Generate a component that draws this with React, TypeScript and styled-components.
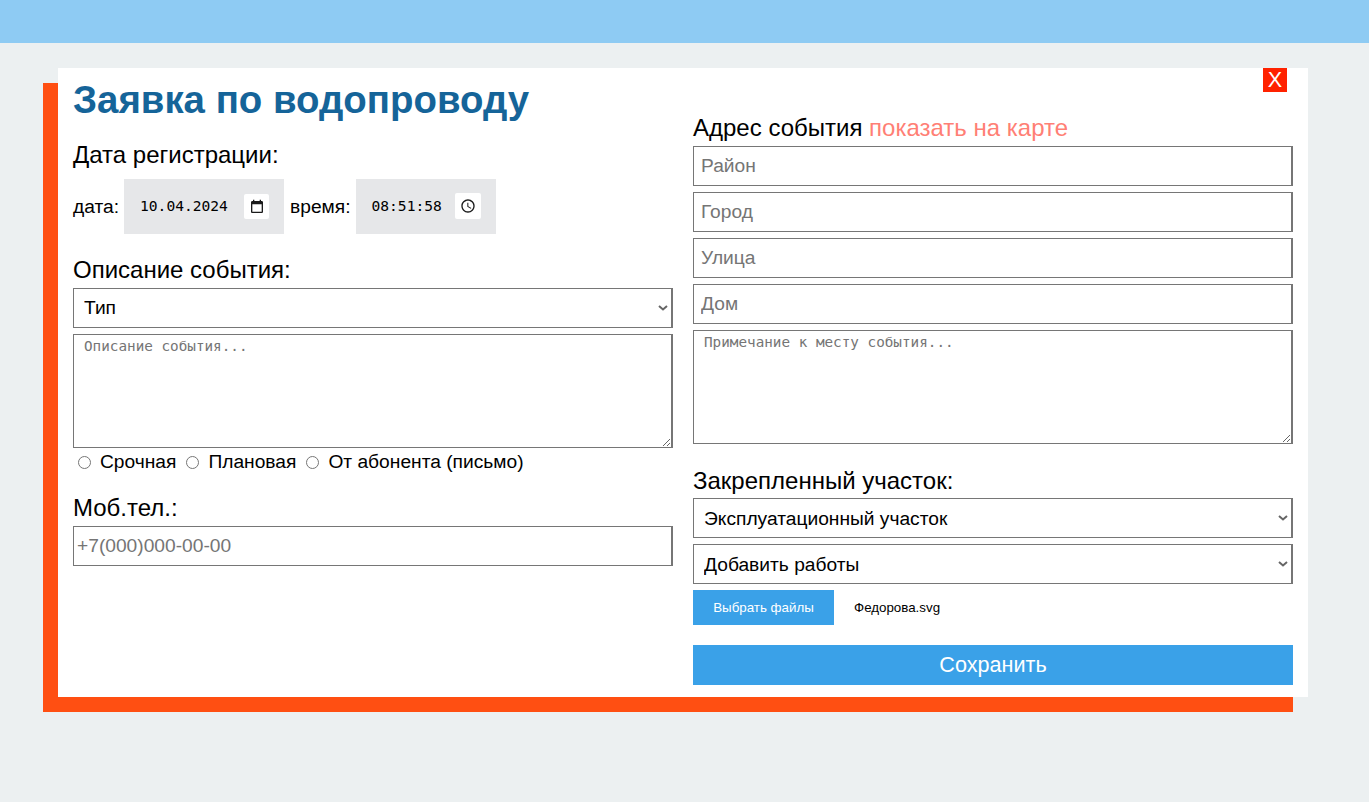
import React from "react";
import styled, { createGlobalStyle } from "styled-components";

const chevron =
  "data:image/svg+xml," +
  encodeURIComponent(
    '<svg xmlns="http://www.w3.org/2000/svg" width="10" height="6" viewBox="0 0 10 6"><path d="M1 1l4 3.5L9 1" fill="none" stroke="#666" stroke-width="2"/></svg>'
  );

const Global = createGlobalStyle`
  html, body { margin: 0; padding: 0; background: #ecf0f1; font-family: "Liberation Sans", Arial, sans-serif; }
  * { box-sizing: border-box; }
`;
const Page = styled.div`
  height: 802px;
  overflow: hidden;
`;
const TopBar = styled.div`
  height: 43px;
  background: #8ecbf3;
`;
const Modal = styled.form`
  position: relative;
  width: 1250px;
  height: 629px;
  margin: 25px 0 0 58px;
  padding: 15px;
  background: #fff;
  box-shadow: -15px 15px 0 #ff4f12;
  display: grid;
  grid-template-columns: 600px 600px;
  column-gap: 20px;
`;
const Close = styled.button`
  position: absolute;
  top: 0;
  right: 21px;
  width: 24px;
  height: 24px;
  padding: 0;
  border: 0;
  background: #ff2200;
  color: #fff;
  font-family: "Liberation Sans", Arial, sans-serif;
  font-size: 21.6px;
  line-height: 24px;
`;
const Column = styled.div`
  display: flex;
  flex-direction: column;
  min-width: 0;
`;
const Title = styled.h1`
  margin: 0 0 25px;
  font-size: 38.4px;
  line-height: 33px;
  font-weight: 700;
  color: #156499;
`;
const Label = styled.div<{ $mt?: number; $mb?: number }>`
  font-size: 24px;
  line-height: 28px;
  color: #000;
  margin-top: ${(p) => p.$mt ?? 0}px;
  margin-bottom: ${(p) => p.$mb ?? 3}px;
`;
const Link = styled.span`
  color: #ff7f75;
`;
const DateRow = styled.div`
  display: flex;
  align-items: center;
  gap: 5px;
  margin-top: 7px;
  font-size: 19.2px;
`;
const TimeText = styled.span`
  margin-left: 1px;
  margin-right: 1px;
`;
const PickerField = styled.div<{ $w: number; $pl: number }>`
  width: ${(p) => p.$w}px;
  height: 55px;
  padding: 0 15px 0 ${(p) => p.$pl}px;
  background: #e6e7e9;
  display: flex;
  align-items: center;
  justify-content: space-between;
`;
const PickerValue = styled.input`
  width: 92px;
  min-width: 0;
  padding: 0;
  margin-bottom: 2px;
  border: 0;
  outline: 0;
  background: transparent;
  font-family: "DejaVu Sans Mono", "Liberation Mono", monospace;
  font-size: 14.6px;
  color: #000;
`;
const PickerButton = styled.button<{ $size: number; $lift?: number }>`
  width: ${(p) => p.$size}px;
  height: ${(p) => p.$size}px;
  margin-bottom: ${(p) => p.$lift ?? 0}px;
  flex: none;
  padding: 0;
  border: 0;
  border-radius: 2px;
  background: #fff;
  display: flex;
  align-items: center;
  justify-content: center;
`;
const Box = styled.input`
  display: block;
  width: 100%;
  height: 40px;
  padding: 0 7px;
  margin-bottom: 6px;
  border-style: solid;
  border-color: #767676;
  border-width: 1px 2px 1px 1px;
  border-radius: 0;
  outline: 0;
  background: #fff;
  font-family: "Liberation Sans", Arial, sans-serif;
  font-size: 19.2px;
  color: #000;
  &::placeholder { color: #757575; opacity: 1; }
`;
const PhoneBox = styled(Box)`
  padding: 0 3px;
`;
const Select = styled.select`
  display: block;
  width: 100%;
  height: 40px;
  padding: 0 10px;
  margin-bottom: 6px;
  border-style: solid;
  border-color: #767676;
  border-width: 1px 2px 1px 1px;
  border-radius: 0;
  outline: 0;
  appearance: none;
  background: #fff url("${chevron}") no-repeat right 3px center;
  font-family: "Liberation Sans", Arial, sans-serif;
  font-size: 19.2px;
  color: #000;
`;
const TypeSelect = styled(Select)`
  padding-bottom: 2px;
`;
const Area = styled.textarea`
  display: block;
  width: 100%;
  height: 114px;
  padding: 3px 10px;
  border-style: solid;
  border-color: #767676;
  border-width: 1px 2px 1px 1px;
  border-radius: 0;
  outline: 0;
  background: #fff;
  font-family: "DejaVu Sans Mono", monospace;
  font-size: 14.3px;
  color: #000;
  &::placeholder { color: #757575; opacity: 1; }
`;
const Radios = styled.div`
  display: flex;
  align-items: center;
  height: 28px;
  padding-left: 5px;
  font-size: 19.2px;
`;
const RadioLabel = styled.label`
  display: flex;
  align-items: center;
  margin-right: 10px;
`;
const Radio = styled.input`
  width: 13px;
  height: 13px;
  margin: 0 9px 0 0;
`;
const FileRow = styled.div`
  display: flex;
  align-items: center;
  height: 35px;
  margin-bottom: 20px;
`;
const FileButton = styled.button`
  width: 141px;
  height: 35px;
  border: 0;
  padding: 0;
  background: #3aa1e8;
  color: #fff;
  font-family: "Liberation Sans", Arial, sans-serif;
  font-size: 13.33px;
`;
const FileName = styled.span`
  margin-left: 20px;
  font-size: 13.33px;
  color: #000;
`;
const Save = styled.button`
  width: 100%;
  height: 40px;
  border: 0;
  padding: 0;
  background: #3aa1e8;
  color: #fff;
  font-family: "Liberation Sans", Arial, sans-serif;
  font-size: 21.6px;
`;

const CalendarIcon = () => (
  <svg width="16" height="16" viewBox="0 0 24 24" fill="#1a1a1a">
    <path d="M19 3h-1V1h-2v2H8V1H6v2H5c-1.1 0-2 .9-2 2v14c0 1.1.9 2 2 2h14c1.1 0 2-.9 2-2V5c0-1.1-.9-2-2-2zm0 16H5V8h14v11z" />
  </svg>
);
const ClockIcon = () => (
  <svg width="16" height="16" viewBox="0 0 24 24" fill="#1a1a1a">
    <path d="M11.99 2C6.47 2 2 6.48 2 12s4.47 10 9.99 10C17.52 22 22 17.52 22 12S17.52 2 11.99 2zM12 20c-4.42 0-8-3.58-8-8s3.58-8 8-8 8 3.58 8 8-3.58 8-8 8z" />
    <path d="M12.5 7H11v6l5.25 3.15.75-1.23-4.5-2.67z" />
  </svg>
);

export default function App() {
  return (
    <Page>
      <Global />
      <TopBar />
      <Modal onSubmit={(e) => e.preventDefault()}>
        <Close type="button">X</Close>
        <Column>
          <Title>Заявка по водопроводу</Title>
          <Label>Дата регистрации:</Label>
          <DateRow>
            <span>дата:</span>
            <PickerField $w={160} $pl={16}>
              <PickerValue defaultValue="10.04.2024" />
              <PickerButton type="button" $size={25}><CalendarIcon /></PickerButton>
            </PickerField>
            <TimeText>время:</TimeText>
            <PickerField $w={140} $pl={15}>
              <PickerValue defaultValue="08:51:58" />
              <PickerButton type="button" $size={26} $lift={1}><ClockIcon /></PickerButton>
            </PickerField>
          </DateRow>
          <Label $mt={22} $mb={4}>Описание события:</Label>
          <TypeSelect defaultValue="Тип">
            <option>Тип</option>
          </TypeSelect>
          <Area placeholder="Описание события..." />
          <Radios>
            <RadioLabel><Radio type="radio" name="k" />Срочная</RadioLabel>
            <RadioLabel><Radio type="radio" name="k" />Плановая</RadioLabel>
            <RadioLabel><Radio type="radio" name="k" />От абонента (письмо)</RadioLabel>
          </Radios>
          <Label $mt={18} $mb={4}>Моб.тел.:</Label>
          <PhoneBox placeholder="+7(000)000-00-00" />
        </Column>
        <Column>
          <Label $mt={31} $mb={4}>Адрес события <Link>показать на карте</Link></Label>
          <Box placeholder="Район" />
          <Box placeholder="Город" />
          <Box placeholder="Улица" />
          <Box placeholder="Дом" />
          <Area placeholder="Примечание к месту события..." />
          <Label $mt={23}>Закрепленный участок:</Label>
          <Select defaultValue="Эксплуатационный участок">
            <option>Эксплуатационный участок</option>
          </Select>
          <Select defaultValue="Добавить работы">
            <option>Добавить работы</option>
          </Select>
          <FileRow>
            <FileButton type="button">Выбрать файлы</FileButton>
            <FileName>Федорова.svg</FileName>
          </FileRow>
          <Save type="submit">Сохранить</Save>
        </Column>
      </Modal>
    </Page>
  );
}
